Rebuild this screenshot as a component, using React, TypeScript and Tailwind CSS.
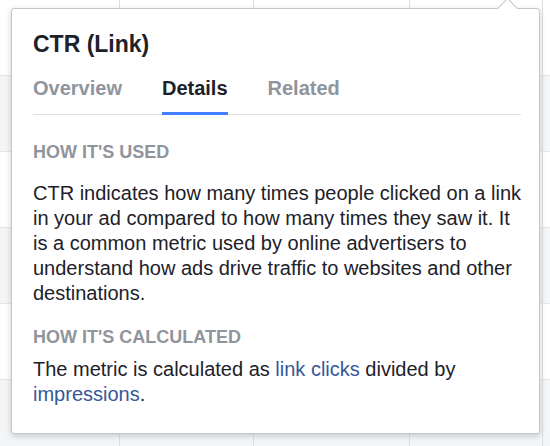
const FONT = { fontFamily: '"Helvetica Neue", Helvetica, "Liberation Sans", Arial, sans-serif' };

const ROWS = ["bg-white", "bg-[#f4f5f6]", "bg-white", "bg-[#f4f5f6]", "bg-white", "bg-[#f4f5f6]"];

function TableBackdrop() {
  return (
    <div className="flex flex-col">
      {ROWS.map((bg, i) => (
        <div key={i} className={`flex h-[76px] border-b border-[#e5e6e9] ${bg}`}>
          <div className="w-[120px] border-r border-[#dddfe2]" />
          <div className="w-[134px] border-r border-[#dddfe2]" />
          <div className="w-[156px] border-r border-[#dddfe2]" />
          <div className="w-[133px] border-r border-[#dddfe2]" />
          <div className="flex-1" />
        </div>
      ))}
    </div>
  );
}

export default function App() {
  return (
    <div className="relative h-[446px] w-[550px] overflow-hidden bg-white" style={FONT}>
      <TableBackdrop />

      {/* Popover */}
      <div className="absolute left-[11px] top-[8px] h-[426px] w-[529px] rounded-[3px] border border-[#c4c6ca] bg-white pl-[21px] pr-[18px] shadow-[0_2px_6px_rgba(0,0,0,0.18)]">
        {/* Arrow */}
        <div className="absolute right-[24px] top-[-8px] h-[15px] w-[15px] rotate-45 border-l border-t border-[#c4c6ca] bg-white" />

        <h2 className="pt-[21px] text-[23px] font-bold leading-[28px] text-[#1d2129]">CTR (Link)</h2>

        <div className="mt-[18px] flex gap-[40px] border-b border-[#dddfe2] text-[20px] font-bold leading-[24px]">
          <span className="pb-[14px] text-[#90949c]">Overview</span>
          <span className="-mb-px border-b-[3px] border-[#4080ff] pb-[11px] text-[#1d2129]">Details</span>
          <span className="pb-[14px] text-[#90949c]">Related</span>
        </div>

        <h3 className="mt-[26px] text-[18px] font-bold leading-[22px] text-[#90949c]">HOW IT'S USED</h3>
        <p className="mt-[18px] text-[20px] leading-[25px] text-[#1d2129]">
          CTR indicates how many times people clicked on a link in your ad compared to how many times they saw it. It
          is a common metric used by online advertisers to understand how ads drive traffic to websites and other
          destinations.
        </p>

        <h3 className="mt-[20px] text-[18px] font-bold leading-[22px] text-[#90949c]">HOW IT'S CALCULATED</h3>
        <p className="mt-[9px] text-[20px] leading-[25px] text-[#1d2129]">
          The metric is calculated as <a className="text-[#365899]">link clicks</a> divided by{" "}
          <a className="text-[#365899]">impressions</a>.
        </p>
      </div>
    </div>
  );
}
